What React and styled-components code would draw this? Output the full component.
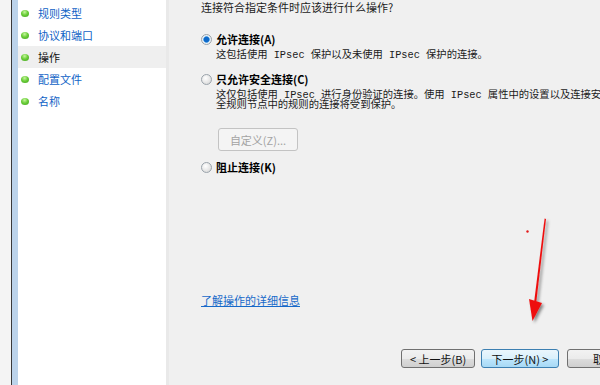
import React from 'react'
import styled, { createGlobalStyle } from 'styled-components'

const GlobalStyle = createGlobalStyle`
  html, body {
    margin: 0;
    padding: 0;
    background: #f0f0f0;
  }
  body {
    font-family: "Noto Sans CJK SC", "Noto Sans", sans-serif;
    font-size: 11px;
    color: #000;
  }
`

const Window = styled.div`
  position: relative;
  display: flex;
  width: 600px;
  height: 385px;
  overflow: hidden;
  background: #f0f0f0;
`

const OuterEdge = styled.div`
  width: 11px;
  background: #f4f4f4;
  border-right: 1px solid #3a3a3a;
`

const BlueStrip = styled.div`
  width: 6px;
  background: #bcd3ea;
`

const NavPanel = styled.ul`
  list-style: none;
  margin: 0;
  padding: 2px 0 0 0;
  width: 148px;
  background: #ffffff;
  border-right: 3px solid #e9e9e9;
`

const NavItem = styled.li`
  display: flex;
  align-items: center;
  gap: 9px;
  height: 22px;
  padding-left: 3px;
  background: ${p => (p.$active ? '#efefef' : 'transparent')};
  color: ${p => (p.$active ? '#111' : '#0f62c6')};
  font-size: 11px;
`

const Bullet = styled.span`
  width: 8px;
  height: 7px;
  border-radius: 50%;
  background: radial-gradient(circle at 45% 30%, #c8f5a0 0%, #6ccf3a 45%, #3f9e1c 100%);
`

const Content = styled.div`
  flex: 1;
  display: flex;
  flex-direction: column;
  padding-left: 32px;
  overflow: hidden;
`

const Question = styled.div`
  line-height: 14px;
  color: #1a1a1a;
  white-space: nowrap;
`

const OptionRow = styled.div`
  display: flex;
  align-items: center;
  gap: 4px;
  height: 16px;
  margin-top: ${p => p.$top}px;
  font-weight: bold;
  white-space: nowrap;
`

const Radio = styled.span`
  box-sizing: border-box;
  width: 11px;
  height: 11px;
  border-radius: 50%;
  border: 1px solid #9aa3ab;
  background: ${p =>
    p.$checked
      ? 'radial-gradient(circle, #0f69c9 0 2.5px, #5aa8e8 3px, #e6eef5 3.6px, #f3f3f3 100%)'
      : 'radial-gradient(circle at 40% 35%, #ffffff 0%, #e4e4e4 60%, #cfcfcf 100%)'};
`

const Description = styled.div`
  margin-left: 15px;
  margin-top: ${p => p.$top}px;
  line-height: ${p => p.$lh}px;
  font-family: "Liberation Mono", "Noto Sans CJK SC", monospace;
  font-size: 10.3px;
  color: #1a1a1a;
  white-space: nowrap;
`

const CustomButton = styled.button`
  box-sizing: border-box;
  align-self: flex-start;
  margin: 18px 0 0 17px;
  width: 80px;
  height: 23px;
  padding: 0;
  border: 1px solid #c3c3c3;
  border-radius: 3px;
  background: #f4f4f4;
  color: #a3a3a3;
  font-family: "Noto Sans CJK SC", sans-serif;
  font-size: 11px;
`

const HelpLink = styled.a`
  margin-top: 118px;
  line-height: 14px;
  color: #1769c9;
  text-decoration: underline;
  white-space: nowrap;
  align-self: flex-start;
`

const Footer = styled.div`
  display: flex;
  gap: 6px;
  margin-top: 42px;
  margin-left: 200px;
`

const WizardButton = styled.button`
  box-sizing: border-box;
  flex-shrink: 0;
  width: ${p => p.$w}px;
  height: 19px;
  padding: 0;
  margin-right: ${p => p.$gap || 0}px;
  border: 1px solid ${p => (p.$primary ? '#3c7fb1' : '#707070')};
  border-radius: 3px;
  background: ${p =>
    p.$primary
      ? 'linear-gradient(#eaf6fd 0%, #d9f0fc 50%, #bee6fd 51%, #a7d9f5 100%)'
      : 'linear-gradient(#f2f2f2 0%, #ebebeb 50%, #dddddd 51%, #cfcfcf 100%)'};
  color: #111;
  font-family: "Noto Sans CJK SC", sans-serif;
  font-size: 11px;
  line-height: 16px;
  white-space: nowrap;
  overflow: hidden;
`

const ArrowOverlay = styled.svg`
  position: absolute;
  left: 0;
  top: 0;
  pointer-events: none;
`

const navItems = ['规则类型', '协议和端口', '操作', '配置文件', '名称']

export default function App() {
  return (
    <Window>
      <GlobalStyle />
      <OuterEdge />
      <BlueStrip />
      <NavPanel>
        {navItems.map(item => (
          <NavItem key={item} $active={item === '操作'}>
            <Bullet />
            {item}
          </NavItem>
        ))}
      </NavPanel>
      <Content>
        <Question>连接符合指定条件时应该进行什么操作?</Question>

        <OptionRow $top={17}>
          <Radio $checked />
          允许连接(A)
        </OptionRow>
        <Description $top={1} $lh={14}>
          这包括使用 IPsec 保护以及未使用 IPsec 保护的连接。
        </Description>

        <OptionRow $top={9}>
          <Radio />
          只允许安全连接(C)
        </OptionRow>
        <Description $top={3} $lh={10}>
          这仅包括使用 IPsec 进行身份验证的连接。使用 IPsec 属性中的设置以及连接安
          <br />
          全规则节点中的规则的连接将受到保护。
        </Description>

        <CustomButton disabled>自定义(Z)...</CustomButton>

        <OptionRow $top={8}>
          <Radio />
          阻止连接(K)
        </OptionRow>

        <HelpLink>了解操作的详细信息</HelpLink>

        <Footer>
          <WizardButton $w={74}>&lt; 上一步(B)</WizardButton>
          <WizardButton $w={78} $primary $gap={2}>下一步(N) &gt;</WizardButton>
          <WizardButton $w={74}>取消</WizardButton>
        </Footer>
      </Content>

      <ArrowOverlay width="600" height="385" viewBox="0 0 600 385">
        <defs>
          <filter id="shadow" x="-50%" y="-10%" width="200%" height="120%">
            <feDropShadow dx="2" dy="2" stdDeviation="1.5" floodColor="#000" floodOpacity="0.45" />
          </filter>
        </defs>
        <g filter="url(#shadow)">
          <path d="M544.6 218.5 L546 219 L536.2 303 L534 303 Z" fill="#ee1111" />
          <path d="M529 299 L542 303 L532.5 321 Z" fill="#ee1111" />
        </g>
        <circle cx="527.5" cy="231.5" r="1.2" fill="#e21a1a" />
      </ArrowOverlay>
    </Window>
  )
}
